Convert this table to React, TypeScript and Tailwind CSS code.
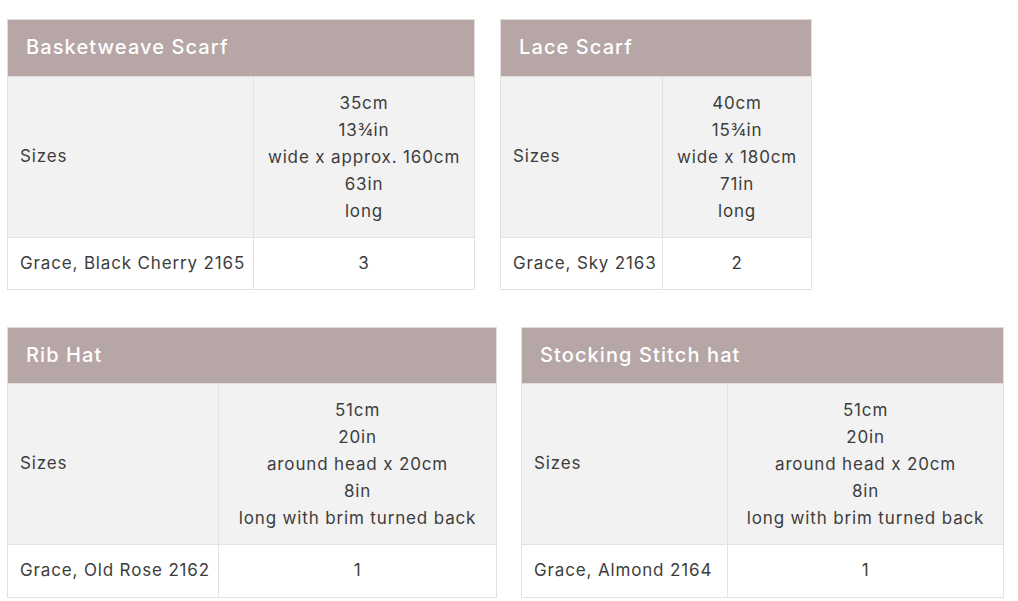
const FONT = "font-['Inter',_'Liberation_Sans',_sans-serif]";

type Spec = {
  title: string;
  sizes: string[];
  yarn: string;
  qty: string;
  col1: number;
  col2: number;
  headH: string;
  yarnH: string;
};

const TOP: Spec[] = [
  {
    title: "Basketweave Scarf",
    sizes: ["35cm", "13¾in", "wide x approx. 160cm", "63in", "long"],
    yarn: "Grace, Black Cherry 2165",
    qty: "3",
    col1: 246,
    col2: 221,
    headH: "h-[57px]",
    yarnH: "h-[52px]",
  },
  {
    title: "Lace Scarf",
    sizes: ["40cm", "15¾in", "wide x 180cm", "71in", "long"],
    yarn: "Grace, Sky 2163",
    qty: "2",
    col1: 162,
    col2: 149,
    headH: "h-[57px]",
    yarnH: "h-[52px]",
  },
];

const BOTTOM: Spec[] = [
  {
    title: "Rib Hat",
    sizes: ["51cm", "20in", "around head x 20cm", "8in", "long with brim turned back"],
    yarn: "Grace, Old Rose 2162",
    qty: "1",
    col1: 211,
    col2: 278,
    headH: "h-[56px]",
    yarnH: "h-[53px]",
  },
  {
    title: "Stocking Stitch hat",
    sizes: ["51cm", "20in", "around head x 20cm", "8in", "long with brim turned back"],
    yarn: "Grace, Almond 2164",
    qty: "1",
    col1: 206,
    col2: 276,
    headH: "h-[56px]",
    yarnH: "h-[53px]",
  },
];

function YarnTable({ spec }: { spec: Spec }) {
  return (
    <table
      className="border-collapse table-fixed text-[17px] tracking-[0.05em] text-[#3d3d3d]"
      style={{ width: spec.col1 + spec.col2 }}
    >
      <colgroup>
        <col style={{ width: spec.col1 }} />
        <col style={{ width: spec.col2 }} />
      </colgroup>
      <thead>
        <tr>
          <th
            colSpan={2}
            className={`${spec.headH} border border-[#e2dcdc] bg-[#b6a6a6] pl-[18px] pb-[2px] text-left text-[20px] font-medium tracking-[0.055em] text-white`}
          >
            {spec.title}
          </th>
        </tr>
      </thead>
      <tbody>
        <tr className="h-[161px] bg-[#f2f2f2]">
          <td className="border border-[#e2e2e2] pl-[12px] align-middle">Sizes</td>
          <td className="border border-[#e2e2e2] text-center align-middle leading-[27px]">
            {spec.sizes.map((s) => (
              <div key={s}>{s}</div>
            ))}
          </td>
        </tr>
        <tr className={`${spec.yarnH} bg-white`}>
          <td className="border border-[#e2e2e2] pl-[12px] whitespace-nowrap">{spec.yarn}</td>
          <td className="border border-[#e2e2e2] text-center">{spec.qty}</td>
        </tr>
      </tbody>
    </table>
  );
}

export default function App() {
  return (
    <div className={`${FONT} min-h-[601px] w-[1018px] bg-white pl-[7px] pt-[19px]`}>
      <div className="flex items-start gap-[25px]">
        {TOP.map((s) => (
          <YarnTable key={s.title} spec={s} />
        ))}
      </div>
      <div className="mt-[37px] flex items-start gap-[24px]">
        {BOTTOM.map((s) => (
          <YarnTable key={s.title} spec={s} />
        ))}
      </div>
    </div>
  );
}
